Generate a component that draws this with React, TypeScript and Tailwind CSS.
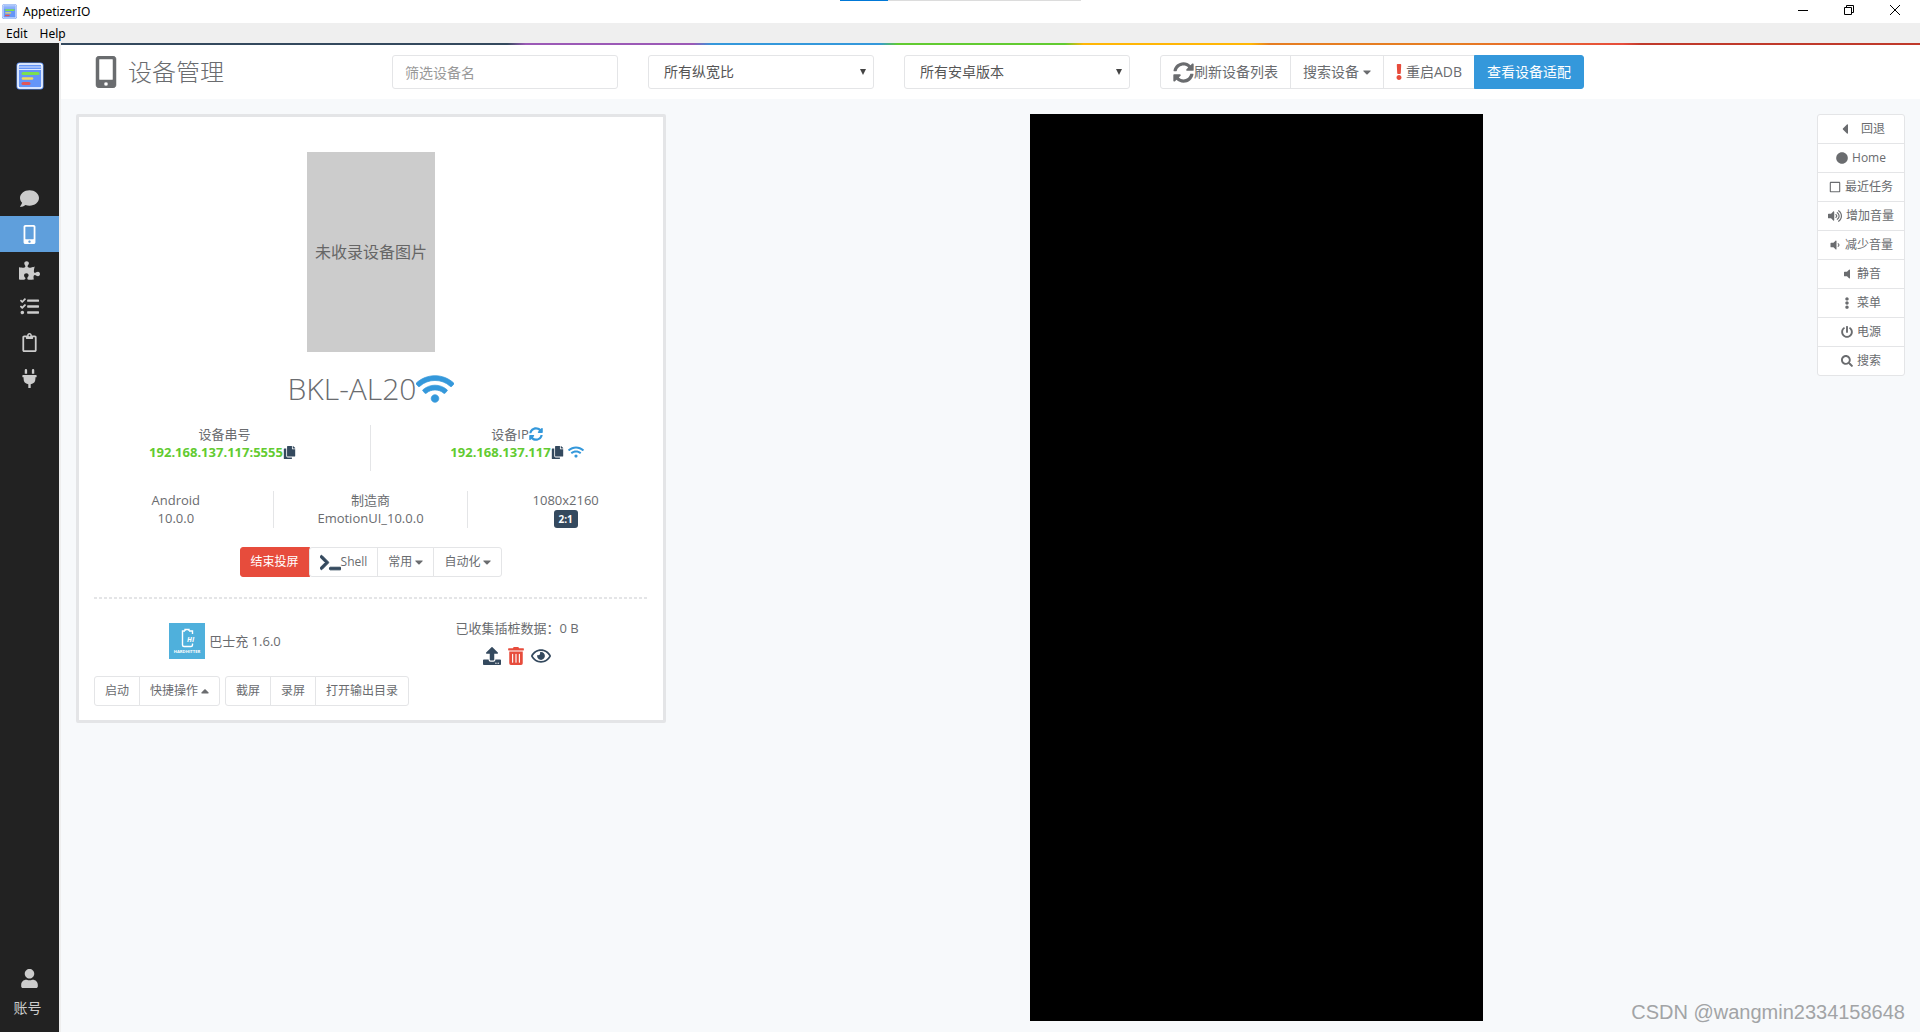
import React, { useState } from 'react'
import type { ReactNode } from 'react'
import type { IconType } from 'react-icons'
import {
  FaCaretDown,
  FaCaretLeft,
  FaCaretUp,
  FaCircle,
  FaComment,
  FaCopy,
  FaEllipsisV,
  FaExclamation,
  FaMobileAlt,
  FaPlug,
  FaPowerOff,
  FaPuzzlePiece,
  FaRegClipboard,
  FaRegEye,
  FaRegSquare,
  FaSearch,
  FaSyncAlt,
  FaTasks,
  FaTerminal,
  FaTrashAlt,
  FaUpload,
  FaUser,
  FaVolumeDown,
  FaVolumeOff,
  FaVolumeUp,
  FaWifi,
} from 'react-icons/fa'

interface NavItem {
  name: string
  href: string
  icon: IconType
}

const navigation: Array<NavItem> = [
  { name: '消息', href: '#messages', icon: FaComment },
  { name: '设备', href: '#devices', icon: FaMobileAlt },
  { name: '插件', href: '#plugins', icon: FaPuzzlePiece },
  { name: '任务', href: '#tasks', icon: FaTasks },
  { name: '报告', href: '#reports', icon: FaRegClipboard },
  { name: '连接', href: '#connect', icon: FaPlug },
]

interface RemoteKey {
  name: string
  icon: IconType
  size: string
}

const remoteKeys: Array<RemoteKey> = [
  { name: '回退', icon: FaCaretLeft, size: 'mr-1 size-4' },
  { name: 'Home', icon: FaCircle, size: 'size-3' },
  { name: '最近任务', icon: FaRegSquare, size: 'size-3' },
  { name: '增加音量', icon: FaVolumeUp, size: 'size-3.5' },
  { name: '减少音量', icon: FaVolumeDown, size: 'size-3' },
  { name: '静音', icon: FaVolumeOff, size: 'size-3' },
  { name: '菜单', icon: FaEllipsisV, size: 'size-3' },
  { name: '电源', icon: FaPowerOff, size: 'size-3' },
  { name: '搜索', icon: FaSearch, size: 'size-3' },
]

const AppLogo = ({ className }: { className: string }) => (
  <svg viewBox="0 0 28 28" className={className} aria-hidden="true">
    <rect x="0.5" y="0.5" width="27" height="27" rx="3" fill="#5b8def" />
    <rect x="2" y="2" width="24" height="24" rx="2" fill="#6495f8" stroke="#fff" strokeWidth="1.5" />
    <path d="M3 5h22M3 7.5h22" stroke="#dbe7ff" strokeWidth="1" />
    <path d="M7 11.5h15" stroke="#7be04f" strokeWidth="3" strokeLinecap="round" />
    <path d="M7 16.5h9" stroke="#f2d95c" strokeWidth="2.6" strokeLinecap="round" />
    <path d="M7 21.5h6" stroke="#e0565b" strokeWidth="3" strokeLinecap="round" />
  </svg>
)

interface GroupButtonProps {
  children: ReactNode
  large?: boolean
}

const GroupButton = ({ children, large }: GroupButtonProps) => (
  <button
    type="button"
    className={`${
      large ? 'h-[34px] px-3 text-sm' : 'h-[30px] px-[10px] text-xs'
    } -ml-px flex shrink-0 items-center border border-[#e4e5e7] bg-white whitespace-nowrap text-[#6a6c6f] first:ml-0 first:rounded-l-[3px] last:rounded-r-[3px] hover:bg-gray-50`}
  >
    {children}
  </button>
)

const TitleBar = () => (
  <div className="relative flex h-[23px] items-center justify-between bg-white pl-[2px] text-black">
    <div className="absolute top-0 left-[840px] flex h-px w-[241px] bg-[#dcdcdc]">
      <div className="h-px w-12 bg-[#0078d7]" />
    </div>
    <div className="flex items-center gap-[6px] font-['Noto_Sans',sans-serif] text-xs">
      <AppLogo className="size-[15px]" />
      <span>AppetizerIO</span>
    </div>
    <div className="flex items-center gap-9 pr-5 pb-[3px]">
      <button type="button" aria-label="最小化">
        <svg viewBox="0 0 10 10" className="size-[10px]" stroke="#000" fill="none">
          <path d="M0 5.5h10" />
        </svg>
      </button>
      <button type="button" aria-label="还原">
        <svg viewBox="0 0 10 10" className="size-[10px]" stroke="#000" fill="none">
          <path d="M0.5 2.5h7v7h-7zM2.5 2.5v-2h7v7h-2" />
        </svg>
      </button>
      <button type="button" aria-label="关闭">
        <svg viewBox="0 0 10 10" className="size-[10px]" stroke="#000" fill="none">
          <path d="M0 0l10 10M10 0L0 10" />
        </svg>
      </button>
    </div>
  </div>
)

const Sidebar = () => (
  <nav className="flex w-[61px] shrink-0 flex-col border-r-2 border-[#eeeeee] bg-[#222222] text-[#cccccc]">
    <a href="#home" aria-label="AppetizerIO" className="flex justify-center pt-[19px] pb-[90px]">
      <AppLogo className="size-7" />
    </a>
    {navigation.map((item) => {
      const Icon = item.icon
      const active = item.href === '#devices'
      return (
        <a
          key={item.name}
          href={item.href}
          aria-label={item.name}
          className={`${
            active ? 'bg-[#5f9fdc] text-white' : 'hover:text-white'
          } flex h-9 items-center justify-center`}
        >
          <Icon className={item.href === '#plugins' ? 'size-[21px]' : 'size-[19px]'} />
        </a>
      )
    })}
    <a href="#account" className="mt-auto flex flex-col items-center gap-[10px] pb-[14px] text-sm leading-5">
      <FaUser className="size-[19px]" />
      <span className="pr-1">账号</span>
    </a>
  </nav>
)

const Header = () => {
  const [keyword, setKeyword] = useState('')
  return (
    <header className="bg-white">
      <div className="h-[2px] bg-[linear-gradient(to_right,#34495e_24%,#9b59b6_25%,#9b59b6_34%,#3498db_35%,#3498db_44%,#62cb31_45%,#62cb31_54%,#ffb606_55%,#ffb606_64%,#e67e22_65%,#e67e22_75%,#e74c3c_84%,#c0392b_85%)]" />
      <div className="grid h-[54px] grid-cols-[266fr_226fr_226fr_226fr_745fr] items-center gap-x-[30px] pr-[15px] pl-[35px]">
        <h1 className="flex items-center gap-[6px] text-2xl font-light whitespace-nowrap text-[#6a6c6f]">
          <FaMobileAlt className="-ml-[6px] size-8 stroke-[#6a6c6f] stroke-[8]" />
          <span>设备管理</span>
        </h1>
        <input
          type="text"
          aria-label="筛选设备名"
          placeholder="筛选设备名"
          value={keyword}
          onChange={(e) => setKeyword(e.target.value)}
          className="h-[34px] w-full rounded-[3px] border border-[#e4e5e7] bg-white px-3 text-sm text-[#555555] placeholder:text-[#999999]"
        />
        {['所有纵宽比', '所有安卓版本'].map((name) => (
          <div key={name} className="relative">
            <select
              aria-label={name}
              className="h-[34px] w-full appearance-none rounded-[3px] border border-[#e4e5e7] bg-white px-[15px] text-sm text-[#555555]"
            >
              <option>{name}</option>
            </select>
            <svg
              viewBox="0 0 6 6"
              className="pointer-events-none absolute top-[14px] right-2 size-[6px]"
              fill="#444444"
              aria-hidden="true"
            >
              <path d="M0 0h6L3 6z" />
            </svg>
          </div>
        ))}
        <div className="flex">
          <GroupButton large>
            <FaSyncAlt className="size-[21px]" />
            刷新设备列表
          </GroupButton>
          <GroupButton large>
            搜索设备
            <FaCaretDown className="ml-1 h-3.5 w-2" />
          </GroupButton>
          <GroupButton large>
            <FaExclamation className="mr-1 h-4 w-[6px] text-[#e74c3c]" />
            重启ADB
          </GroupButton>
          <button
            type="button"
            className="-ml-px h-[34px] shrink-0 rounded-r-[3px] border border-[#3498db] bg-[#3498db] px-3 text-sm whitespace-nowrap text-white hover:bg-[#2f8ac7]"
          >
            查看设备适配
          </button>
        </div>
      </div>
    </header>
  )
}

const DeviceCard = () => (
  <section className="rounded-[2px] border-[3px] border-[#e4e5e7] bg-white text-[13px] leading-[18px] text-[#6a6c6f]">
    <div className="mx-auto mt-[35px] flex h-[200px] w-32 items-center justify-center bg-[#cccccc] text-base text-[#666666]">
      未收录设备图片
    </div>
    <h2 className="mt-[17px] flex h-10 items-center justify-center text-[30px] font-light">
      BKL-AL20
      <FaWifi className="size-[38px] stroke-[#3498db] stroke-[12] text-[#3498db]" />
    </h2>
    <div className="mt-4 grid h-[46px] grid-cols-2 text-center">
      <div className="border-r border-[#e4e5e7]">
        <p>设备串号</p>
        <p className="flex items-center justify-center pr-1 font-bold text-[#62cb31]">
          192.168.137.117:5555
          <button type="button" aria-label="复制设备串号" className="text-[#34495e]">
            <FaCopy className="size-[13px]" />
          </button>
        </p>
      </div>
      <div>
        <p className="flex items-center justify-center">
          设备IP
          <button type="button" aria-label="刷新设备IP" className="text-[#3498db]">
            <FaSyncAlt className="size-[14px]" />
          </button>
        </p>
        <p className="flex items-center justify-center font-bold text-[#62cb31]">
          192.168.137.117
          <button type="button" aria-label="复制设备IP" className="text-[#34495e]">
            <FaCopy className="size-[13px]" />
          </button>
          <FaWifi className="ml-1 size-4 text-[#3498db]" />
        </p>
      </div>
    </div>
    <div className="mt-5 grid h-9 grid-cols-3 text-center">
      <div className="border-r border-[#e4e5e7]">
        <p>Android</p>
        <p>10.0.0</p>
      </div>
      <div className="border-r border-[#e4e5e7]">
        <p>制造商</p>
        <p>EmotionUI_10.0.0</p>
      </div>
      <div>
        <p>1080x2160</p>
        <p className="mx-auto mt-px w-6 rounded-[3px] bg-[#34495e] text-[10px] font-bold text-white">2:1</p>
      </div>
    </div>
    <div className="mt-5 flex justify-center">
      <button
        type="button"
        className="h-[30px] rounded-l-[3px] border border-[#e74c3c] bg-[#e74c3c] px-[10px] text-xs text-white hover:bg-[#d44334]"
      >
        结束投屏
      </button>
      <div className="-ml-px flex">
        <GroupButton>
          <FaTerminal className="size-[21px] stroke-[#34495e] stroke-[30] text-[#34495e]" />
          Shell
        </GroupButton>
        <GroupButton>
          常用
          <FaCaretDown className="ml-[3px] h-3.5 w-2" />
        </GroupButton>
        <GroupButton>
          自动化
          <FaCaretDown className="ml-[3px] h-3.5 w-2" />
        </GroupButton>
      </div>
    </div>
    <hr className="mx-[15px] mt-5 h-[2px] border-0 bg-[repeating-linear-gradient(to_right,#e4e5e7_0_3px,transparent_3px_5px)]" />
    <div className="mt-5 grid grid-cols-2">
      <div className="flex items-center justify-center gap-1 pb-1">
        <svg viewBox="0 0 36 36" className="size-9" aria-hidden="true">
          <path d="M0 0h36v36H0z" fill="#4fb0dc" />
          <path
            d="M16 8h-2.500v14q0 1.500 1.500 1.500h7q1.500 0 1.500-1.500v-1.500M20 8h3.500v3M16 8v-1.500h4v1.500"
            fill="none"
            stroke="#fff"
            strokeWidth="1.400"
          />
          <text x="18" y="18.500" fontSize="7" fontWeight="700" fontStyle="italic" fill="#fff">
            HI
          </text>
          <text x="18" y="29.500" fontSize="4.200" fontWeight="700" textAnchor="middle" fill="#fff">
            HARDHITTER
          </text>
        </svg>
        巴士充 1.6.0
      </div>
      <div className="text-center">
        <p>已收集插桩数据：0 B</p>
        <div className="mt-[9px] flex items-center justify-center gap-[6px] text-[#34495e]">
          <button type="button" aria-label="上传">
            <FaUpload className="size-[18px]" />
          </button>
          <button type="button" aria-label="删除" className="text-[#e74c3c]">
            <FaTrashAlt className="size-[18px]" />
          </button>
          <button type="button" aria-label="查看">
            <FaRegEye className="size-5" />
          </button>
        </div>
      </div>
    </div>
    <div className="mt-[10px] mb-[14px] flex gap-[5px] px-[15px]">
      <div className="flex">
        <GroupButton>启动</GroupButton>
        <GroupButton>
          快捷操作
          <FaCaretUp className="ml-[3px] h-3.5 w-2" />
        </GroupButton>
      </div>
      <div className="flex">
        <GroupButton>截屏</GroupButton>
        <GroupButton>录屏</GroupButton>
        <GroupButton>打开输出目录</GroupButton>
      </div>
    </div>
  </section>
)

const RemotePanel = () => (
  <div className="flex flex-col rounded-[3px] border border-[#e4e5e7] bg-white text-xs text-[#6a6c6f]">
    {remoteKeys.map((key) => {
      const Icon = key.icon
      return (
        <button
          key={key.name}
          type="button"
          className="flex h-[29px] items-center justify-center gap-1 border-b border-[#e4e5e7] last:h-7 last:border-b-0 hover:bg-gray-50"
        >
          <Icon className={key.size} />
          {key.name}
        </button>
      )
    })}
  </div>
)

export default function App() {
  return (
    <div className="relative flex min-h-screen flex-col bg-[#f7f9fb] font-['Open_Sans','Noto_Sans_CJK_SC',sans-serif]">
      <TitleBar />
      <div className="flex h-5 items-center gap-3 bg-[#efefef] px-[6px] pt-px font-['Noto_Sans',sans-serif] text-xs text-black">
        <button type="button">Edit</button>
        <button type="button">Help</button>
      </div>
      <div className="flex grow">
        <Sidebar />
        <div className="min-w-0 grow">
          <Header />
          <main className="grid grid-cols-[590fr_1151fr_88px] items-start px-[15px] pt-[15px] pb-[11px]">
            <DeviceCard />
            <div className="flex justify-center pl-[30px]">
              <div className="aspect-[453/907] w-full max-w-[453px] bg-black" />
            </div>
            <RemotePanel />
          </main>
        </div>
      </div>
      <p className="absolute right-[15px] bottom-[6px] font-['Liberation_Sans',sans-serif] text-xl leading-7 text-[#a2a4a6]">
        CSDN @wangmin2334158648
      </p>
    </div>
  )
}
